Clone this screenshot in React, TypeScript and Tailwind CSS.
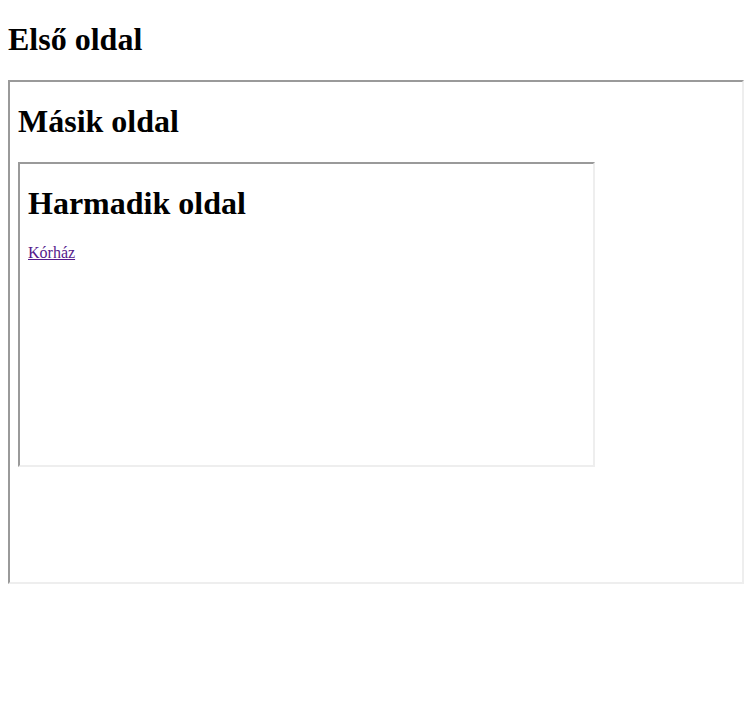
import React from 'react';

const frame = "border-2 border-t-[#9a9a9a] border-l-[#9a9a9a] border-b-[#eeeeee] border-r-[#eeeeee] bg-white px-2 overflow-hidden";
const heading = "text-[32px] font-bold leading-[normal] my-[21.44px]";

export default function App() {
  return (
    <div className="flow-root min-h-[719px] bg-white text-black font-['Liberation_Serif',serif] text-[16px] leading-[normal] px-2">
      <h1 className={heading}>Első oldal</h1>
      <div className={`${frame} w-[736px] h-[504px]`}>
        <h1 className={heading}>Másik oldal</h1>
        <div className={`${frame} w-[577px] h-[305px]`}>
          <h1 className={heading}>Harmadik oldal</h1>
          <p className="my-4">
            <a href="#" className="text-[#551a8b] underline">Kórház</a>
          </p>
        </div>
      </div>
    </div>
  );
}
